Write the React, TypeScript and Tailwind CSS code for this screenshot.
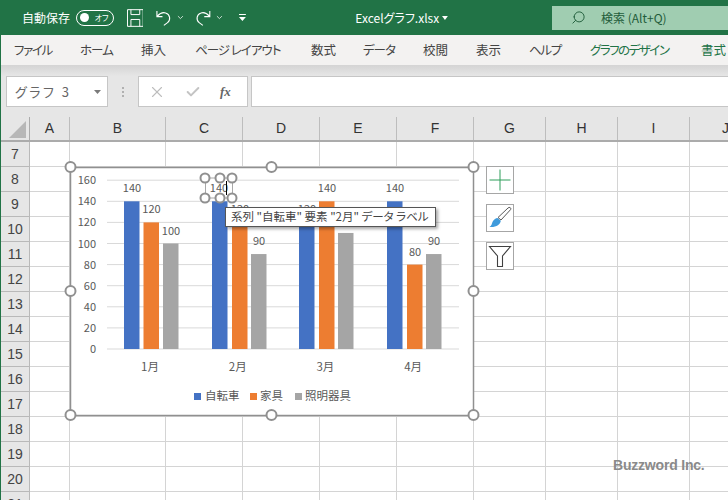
import { Search, ChevronDown, X, Check } from "lucide-react";

const JP = "font-['Noto_Sans_CJK_JP','Noto_Sans',sans-serif]";

const tabs = [
  { label: "ファイル", cls: "w-[38px] ml-[13px] tracking-[-1.3px]" },
  { label: "ホーム", cls: "w-[33px] ml-[28px] tracking-[-1px]" },
  { label: "挿入", cls: "w-[26px] ml-[28px]" },
  { label: "ページ レイアウト", cls: "w-[88px] ml-[28px] tracking-[-1px]" },
  { label: "数式", cls: "w-[26px] ml-[28px]" },
  { label: "データ", cls: "w-[33px] ml-[26px] tracking-[-1px]" },
  { label: "校閲", cls: "w-[26px] ml-[27px]" },
  { label: "表示", cls: "w-[26px] ml-[27px]" },
  { label: "ヘルプ", cls: "w-[32px] ml-[27px] tracking-[-1.300px]" },
  { label: "グラフのデザイン", cls: "w-[82px] ml-[29px] tracking-[-1.500px] text-[#217346]" },
  { label: "書式", cls: "w-[26px] ml-[29px] text-[#217346]" },
];

const columns = [
  { name: "A", cls: "w-[40px]" },
  { name: "B", cls: "w-[96px]" },
  { name: "C", cls: "w-[77px]" },
  { name: "D", cls: "w-[77px]" },
  { name: "E", cls: "w-[77px]" },
  { name: "F", cls: "w-[77px]" },
  { name: "G", cls: "w-[72px]" },
  { name: "H", cls: "w-[72px]" },
  { name: "I", cls: "w-[72px]" },
  { name: "J", cls: "w-[72px]" },
];

const rows = [7, 8, 9, 10, 11, 12, 13, 14, 15, 16, 17, 18, 19, 20, 21];

const series = [
  { color: "#4472c4", xs: [124, 212, 299, 387], values: [140, 140, 120, 140] },
  { color: "#ed7d31", xs: [143.5, 232, 319, 407], values: [120, 120, 140, 80] },
  { color: "#a5a5a5", xs: [163, 251, 338, 426], values: [100, 90, 110, 90] },
];

const yFor = (v: number) => 349 - (v / 20) * 21.1;

const Handle = ({ x, y, r = 5 }: { x: number; y: number; r?: number }) => (
  <circle cx={x} cy={y} r={r} fill="#fff" stroke="#909090" strokeWidth="2" />
);

const Chart = () => (
  <svg
    className="absolute left-[60px] top-[19px] w-[424px] h-[260px]"
    viewBox="60 161 424 260"
    fontFamily="'Noto Sans CJK JP', sans-serif"
    fontSize="11"
    fill="#595959"
  >
    <rect x="70.5" y="167.5" width="403" height="248" fill="#fff" stroke="#909090" strokeWidth="1.5" />
    {[0, 20, 40, 60, 80, 100, 120, 140, 160].map((v) => (
      <g key={v}>
        <line x1="107" x2="459" y1={yFor(v)} y2={yFor(v)} stroke="#d9d9d9" />
        <text x="96" y={yFor(v) + 4} textAnchor="end">{v}</text>
      </g>
    ))}
    {series.map((s) =>
      s.values.map((v, i) => (
        <g key={s.color + i}>
          <rect x={s.xs[i]} y={yFor(v)} width="15.5" height={349 - yFor(v)} fill={s.color} />
          <text x={s.xs[i] + 8} y={yFor(v) - 9} textAnchor="middle">{v}</text>
        </g>
      ))
    )}
    {["1月", "2月", "3月", "4月"].map((m, i) => (
      <text key={m} x={150 + i * 87.7} y="371" textAnchor="middle" fontSize="11.5">{m}</text>
    ))}
    <g fontSize="11.5">
      <rect x="194" y="393" width="7" height="7" fill="#4472c4" />
      <text x="205" y="400">自転車</text>
      <rect x="250" y="393" width="7" height="7" fill="#ed7d31" />
      <text x="260" y="400">家具</text>
      <rect x="295" y="393" width="7" height="7" fill="#a5a5a5" />
      <text x="305" y="400">照明器具</text>
    </g>
    {/* selected data label */}
    <rect x="205.500" y="178" width="27" height="20" fill="#fff" stroke="#8c8c8c" strokeWidth="0.75" />
    <text x="219" y="192" textAnchor="middle">140</text>
    {[205, 220, 232].map((x) => (
      <g key={x}>
        <Handle x={x} y={178} r={4.5} />
        <Handle x={x} y={198} r={4.5} />
      </g>
    ))}
    <path d="M226.500 181v14" stroke="#000" strokeWidth="1" />
    {[
      [70.5, 167],
      [271.5, 167],
      [473.5, 167],
      [70.5, 291],
      [473.5, 291],
      [70.5, 415],
      [271.5, 415],
      [473.5, 415],
    ].map(([x, y]) => (
      <Handle key={`${x}-${y}`} x={x} y={y} />
    ))}
  </svg>
);

const ChartButtons = () => (
  <div className="absolute left-[486px] top-[24px] flex flex-col gap-[10px]">
    <div className="w-[28px] h-[28px] bg-white border border-[#a6a6a6] flex items-center justify-center">
      <svg width="22" height="22" viewBox="0 0 22 22" stroke="#2f9e5b" strokeWidth="1">
        <path d="M11 0.5v21M0.5 11h21" />
      </svg>
    </div>
    <div className="w-[28px] h-[28px] bg-white border border-[#a6a6a6] flex items-center justify-center">
      <svg width="24" height="24" viewBox="0 0 24 24">
        <path d="M22 1.5c1 .5 1 1.5.5 2.2L13 14l-3-2.5L20 2c.7-.6 1.400-.8 2-.5z" fill="#fff" stroke="#595959" />
        <path d="M9.500 12l3.300 2.800c-.5 4-4.500 6.700-11.300 6.200 2.500-1.500 2-3.500 3.500-6 1-1.600 2.800-2.800 4.500-3z" fill="#3f9bdc" />
      </svg>
    </div>
    <div className="w-[28px] h-[28px] bg-white border border-[#a6a6a6] flex items-center justify-center">
      <svg width="24" height="24" viewBox="0 0 24 24" fill="#fff" stroke="#404040" strokeWidth="1.100">
        <path d="M1.500 2.500h21L14.500 12v10.500h-5V12z" />
      </svg>
    </div>
  </div>
);

const App = () => (
  <div className={`w-[728px] h-[500px] overflow-hidden bg-[#e6e6e6] border-l border-[#217346] [font-feature-settings:'palt'] ${JP}`}>
    {/* title bar */}
    <div className="h-[35px] bg-[#217346] flex items-center text-white -ml-px">
      <span className="ml-[22px] text-[12px] w-[49px] whitespace-nowrap">自動保存</span>
      <div className="ml-[6px] w-[38px] h-[16px] rounded-full border border-white flex items-center justify-between pl-[3px] pr-[4px]">
        <span className="w-[9px] h-[9px] rounded-full bg-white" />
        <span className="text-[8px] leading-none">オフ</span>
      </div>
      <svg className="ml-[13px]" width="17" height="18" viewBox="0 0 17 18" fill="none" stroke="#fff">
        <path d="M.5.500h16v17H.5zM4 .500v5h9v-5M4 17.500v-7h9v7" />
      </svg>
      <svg className="ml-[13px]" width="16" height="18" viewBox="0 0 17 18" fill="none" stroke="#fff" strokeWidth="1.200">
        <path d="M1 1.500v6h6M1.500 7c3-3.500 6-4.500 9-3.500 5 1.500 5.500 8 2 10.500L8.500 17" />
      </svg>
      <ChevronDown className="ml-[4px]" size={9} strokeWidth={2} />
      <svg className="ml-[10px]" width="16" height="18" viewBox="0 0 17 18" fill="none" stroke="#fff" strokeWidth="1.200">
        <path d="M16 1.500v6h-6M15.500 7c-3-3.500-6-4.500-9-3.500-5 1.500-5.500 8-2 10.500l4 3" />
      </svg>
      <ChevronDown className="ml-[4px]" size={9} strokeWidth={2} />
      <svg className="ml-[15px]" width="9" height="9" viewBox="0 0 9 9" fill="#fff">
        <path d="M1 1h7v1H1zM1 4h7L4.500 8z" />
      </svg>
      <span className="ml-[108px] text-[12px] w-[84px] whitespace-nowrap">Excelグラフ.xlsx</span>
      <svg className="ml-[3px]" width="6" height="4" viewBox="0 0 6 4" fill="#fff">
        <path d="M0 0h6L3 4z" />
      </svg>
      <div className="ml-[104px] w-[176px] h-[24px] bg-[#a0cdb1] flex items-center text-[#1f5c3a] text-[12px] shrink-0">
        <Search className="ml-[19px] -scale-x-100" size={15} strokeWidth={1.500} />
        <span className="ml-[15px] whitespace-nowrap">検索 (Alt+Q)</span>
      </div>
    </div>
    {/* ribbon tabs */}
    <div className="h-[30px] bg-[#f3f2f1] flex items-center text-[12.500px] text-[#444] whitespace-nowrap -mr-px">
      {tabs.map((t) => (
        <span key={t.label} className={`shrink-0 ${t.cls}`}>{t.label}</span>
      ))}
    </div>
    <div className="h-[11px] bg-gradient-to-b from-[#d4d4d4] to-[#e6e6e6]" />
    {/* formula bar */}
    <div className="h-[31px] flex items-stretch">
      <div className="ml-[5px] w-[102px] bg-white border border-[#c6c6c6] flex items-center justify-between pl-[8px] pr-[6px] text-[13px] text-[#666] tracking-[2.500px]">
        <span>グラフ 3</span>
        <svg width="7" height="4" viewBox="0 0 7 4" fill="#7a7a7a"><path d="M0 0h7L3.500 4z" /></svg>
      </div>
      <div className="w-[30px] flex flex-col items-center justify-center gap-[2px]">
        <span className="w-[2px] h-[2px] bg-[#b0b0b0]" />
        <span className="w-[2px] h-[2px] bg-[#b0b0b0]" />
        <span className="w-[2px] h-[2px] bg-[#b0b0b0]" />
      </div>
      <div className="w-[110px] bg-white border border-[#c6c6c6] flex items-center pl-[9px]">
        <X size={18} strokeWidth={1.500} color="#bdbdbd" />
        <Check className="ml-[19px]" size={16} strokeWidth={3} color="#c4c4c4" />
        <span className="ml-[19px] text-[13px] italic font-bold text-[#666] font-['Liberation_Serif',serif]">fx</span>
      </div>
      <div className="ml-[3px] flex-1 bg-white border border-[#c6c6c6] border-r-0" />
    </div>
    <div className="h-[10px]" />
    {/* column headers */}
    <div className="h-[25px] flex border-b-2 border-[#ababab] text-[14px] text-[#333] font-['Liberation_Sans',sans-serif]">
      <div className="w-[29px] border-r border-[#ababab] flex items-end justify-end pr-[3px] pb-[2px] shrink-0">
        <div className="w-0 h-0 border-l-[17px] border-l-transparent border-b-[17px] border-b-[#b7b7b7]" />
      </div>
      {columns.map((c) => (
        <div key={c.name} className={`shrink-0 border-r border-[#bdbdbd] flex items-center justify-center ${c.cls}`}>{c.name}</div>
      ))}
    </div>
    {/* sheet */}
    <div className="relative -ml-px">
      {rows.map((r) => (
        <div key={r} className="h-[25px] flex">
          <div className="w-[30px] shrink-0 bg-[#e6e6e6] border-r border-b border-[#b9b9b9] border-l border-l-[#217346] flex items-center justify-center text-[14px] text-[#444] font-['Liberation_Sans',sans-serif]">{r}</div>
          {columns.map((c) => (
            <div key={c.name} className={`shrink-0 bg-white border-r border-b border-[#d4d4d4] ${c.cls}`} />
          ))}
        </div>
      ))}
      <Chart />
      <ChartButtons />
      <div className="absolute left-[225px] top-[65px] w-[211px] h-[20px] bg-white border border-[#555] shadow-[2px_2px_3px_rgba(0,0,0,0.35)] flex items-center pl-[5px] text-[11.500px] text-[#444] whitespace-nowrap">
        系列 "自転車" 要素 "2月" データ ラベル
      </div>
      <span className="absolute left-[613px] top-[313px] text-[14px] font-bold text-[#8a8a8a] font-['Liberation_Sans',sans-serif] tracking-[-0.2px]">Buzzword Inc.</span>
    </div>
  </div>
);

export default App;
